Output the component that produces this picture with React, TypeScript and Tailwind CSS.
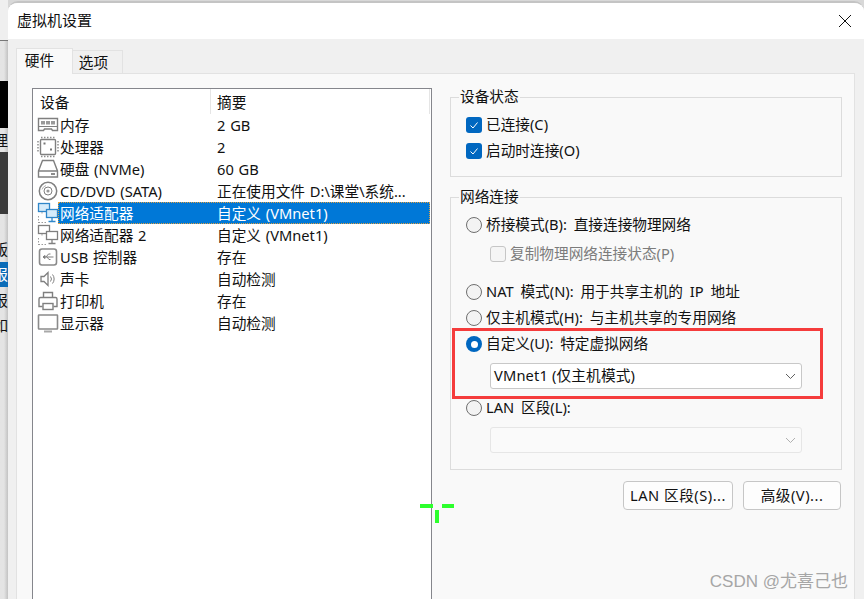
import type { ReactNode } from "react";

const FONT = "font-['Noto_Sans','Noto_Sans_CJK_SC',sans-serif]";

// ---- device icons ----
const iconProps = { width: 22, height: 22, viewBox: "0 0 22 22", fill: "none", stroke: "#7f7f7f", strokeWidth: 1, className: "flex-none" };

function MemoryIcon() {
  return (
    <svg {...iconProps}>
      <path d="M1.5 4.5h19v12h-5l-1-1.5h-7l-1 1.5h-5z" strokeWidth={1.4} />
      <path d="M1.5 12.5h19" />
      <rect x="4" y="7" width="4" height="3.5" fill="#9a9a9a" stroke="none" />
      <rect x="9" y="7" width="4" height="3.5" fill="#9a9a9a" stroke="none" />
      <rect x="14" y="7" width="4" height="3.5" fill="#9a9a9a" stroke="none" />
    </svg>
  );
}

function CpuIcon() {
  return (
    <svg {...iconProps}>
      <rect x="3.5" y="3.5" width="15" height="15" rx="1" strokeWidth={1.4} />
      <path d="M4 1.5h14M4 20.500h14M1 5v12M21 5v12" strokeDasharray="1.5 1.5" strokeWidth={1.5} stroke="#8c8c8c" />
      <rect x="6.5" y="6.5" width="2" height="2" fill="#777" stroke="none" />
      <rect x="13" y="12.5" width="2" height="2" fill="#777" stroke="none" />
    </svg>
  );
}

function DiskIcon() {
  return (
    <svg {...iconProps}>
      <path d="M5.5 2.5h11l4 10.5v6h-19v-6z" strokeWidth={1.4} />
      <path d="M1.5 13h19" strokeWidth={1.4} />
      <path d="M14 16h4" stroke="#666" strokeWidth={1.5} />
    </svg>
  );
}

function CdIcon() {
  return (
    <svg {...iconProps}>
      <circle cx="11" cy="11" r="8.7" strokeWidth={1.5} />
      <circle cx="11" cy="11" r="4" />
      <circle cx="11" cy="11" r="1.6" fill="#999" stroke="none" />
      <path d="M5 9.5a6 6 0 0 1 4-4" stroke="#b5b5b5" />
    </svg>
  );
}

function NetIcon({ active }: { active?: boolean }) {
  const c = active ? "#2f86c9" : "#7f7f7f";
  return (
    <svg {...iconProps}>
      <rect x="1.5" y="1.5" width="11" height="8" stroke={c} strokeWidth={1.3} fill={active ? "#d6ebfa" : "none"} />
      <rect x="9.5" y="7.5" width="11" height="8" stroke={c} strokeWidth={1.3} fill={active ? "#d6ebfa" : "#fff"} />
      <path d="M15 16v3M11.5 19.5h7" stroke={c} strokeWidth={1.3} />
      <path d="M5 10v3M1.5 14v7M1.5 20.5h8" stroke="#9b9b9b" strokeDasharray="1.5 1.5" />
    </svg>
  );
}

function UsbIcon() {
  return (
    <svg {...iconProps}>
      <rect x="2.5" y="3" width="17" height="16" rx="2.5" strokeWidth={1.6} stroke="#8a8a8a" />
      <path d="M6 11h10.5M9 11l2.5-3h2M10 11l2 2.5h1.5" />
      <path d="M6 11l2-1.5v3z" fill="#7f7f7f" />
    </svg>
  );
}

function SoundIcon() {
  return (
    <svg {...iconProps}>
      <path d="M4 8.5h3l4-4v13l-4-4H4z" strokeWidth={1.3} />
      <path d="M13.5 8.5a4 4 0 0 1 0 5M15.5 6.5a7 7 0 0 1 0 9" />
    </svg>
  );
}

function PrinterIcon() {
  return (
    <svg {...iconProps}>
      <path d="M6.5 7.5v-5h9v5" strokeWidth={1.4} />
      <path d="M5.5 16.5h-3.500v-7.500a1.500 1.500 0 0 1 1.500-1.500h15a1.500 1.500 0 0 1 1.500 1.500v7.500h-3.500" strokeWidth={1.4} />
      <rect x="6" y="13.500" width="10" height="6" strokeWidth={1.4} />
    </svg>
  );
}

function MonitorIcon() {
  return (
    <svg {...iconProps}>
      <rect x="1.500" y="3" width="19" height="14" rx="0.500" strokeWidth={1.600} stroke="#8a8a8a" />
      <path d="M7 19.500h8" strokeWidth={2} stroke="#a8a8a8" />
    </svg>
  );
}

const devices: { icon: ReactNode; name: string; summary: string; selected?: boolean }[] = [
  { icon: <MemoryIcon />, name: "内存", summary: "2 GB" },
  { icon: <CpuIcon />, name: "处理器", summary: "2" },
  { icon: <DiskIcon />, name: "硬盘 (NVMe)", summary: "60 GB" },
  { icon: <CdIcon />, name: "CD/DVD (SATA)", summary: "正在使用文件 D:\\课堂\\系统..." },
  { icon: <NetIcon active />, name: "网络适配器", summary: "自定义 (VMnet1)", selected: true },
  { icon: <NetIcon />, name: "网络适配器 2", summary: "自定义 (VMnet1)" },
  { icon: <UsbIcon />, name: "USB 控制器", summary: "存在" },
  { icon: <SoundIcon />, name: "声卡", summary: "自动检测" },
  { icon: <PrinterIcon />, name: "打印机", summary: "存在" },
  { icon: <MonitorIcon />, name: "显示器", summary: "自动检测" },
];

// ---- form bits ----
function Check({ on, disabled, label }: { on?: boolean; disabled?: boolean; label: string }) {
  return (
    <div className={`flex h-4 items-center gap-1 ${disabled ? "text-[#7c7c7c]" : "text-[#111]"}`}>
      {on ? (
        <span className="flex h-4 w-4 items-center justify-center rounded-[3px] bg-[#0067c0]">
          <svg width="10" height="10" viewBox="0 0 10 10" fill="none" stroke="#fff" strokeWidth="1">
            <path d="M1.500 5.500l2.500 2.500 4.500-5.500" />
          </svg>
        </span>
      ) : (
        <span className="h-4 w-4 rounded-[3px] border border-[#c6c6c6] bg-[#f5f5f5]" />
      )}
      <span className="whitespace-nowrap pb-[2px]">{label}</span>
    </div>
  );
}

function Radio({ on, label, className = "" }: { on?: boolean; label: string; className?: string }) {
  return (
    <div className={`flex h-4 items-center gap-1 text-[#111] ${className}`}>
      {on ? (
        <span className="flex h-4 w-4 items-center justify-center rounded-full bg-[#0067c0]">
          <span className="h-[7px] w-[7px] rounded-full bg-white" />
        </span>
      ) : (
        <span className="h-4 w-4 rounded-full border border-[#6f6f6f] bg-[#f3f3f3]" />
      )}
      <span className="whitespace-nowrap pb-[2px] [word-spacing:3px]">{label}</span>
    </div>
  );
}

function Combo({ value, disabled }: { value?: string; disabled?: boolean }) {
  return (
    <div
      className={`ml-6 flex h-[26px] w-[312px] items-center justify-between rounded-[3px] border pl-[3px] pr-[4px] ${
        disabled ? "border-[#e6e6e6] bg-[#fafafa]" : "border-[#c8c8c8] bg-white"
      }`}
    >
      <span className="whitespace-nowrap pb-[2px] tracking-[0.15px] text-[#111]">{value}</span>
      <svg width="11" height="7" viewBox="0 0 11 7" fill="none" stroke={disabled ? "#b0b0b0" : "#606060"} strokeWidth="1" className="mr-[1px]">
        <path d="M1 1l4.500 4.500L10 1" />
      </svg>
    </div>
  );
}

function Button({ label, width }: { label: string; width: string }) {
  return (
    <div className={`flex h-[29px] items-center justify-center rounded-[4px] border border-[#c6c6c6] bg-[#fdfdfd] pb-[2px] tracking-[0.5px] text-[#111] ${width}`}>
      {label}
    </div>
  );
}

function Group({ title, height, children }: { title: string; height: string; children: ReactNode }) {
  return (
    <fieldset className={`w-[392px] border border-[#dcdcdc] pl-[15px] ${height}`}>
      <legend className="-ml-[7px] h-5 px-[1px] leading-[18px] text-[#111]">{title}</legend>
      {children}
    </fieldset>
  );
}

// ---- clipped window behind the dialog ----
function BackdropStrip() {
  const lower = "bg-linear-to-r from-[#e4e4e4] from-50% to-[#c2c2c2]";
  return (
    <div className="flex h-full w-2 flex-none flex-col overflow-hidden text-[15px] leading-none text-[#111]">
      <div className="h-10 flex-none bg-[#efefef]" />
      <div className={`h-[41px] flex-none border-t border-[#777] ${lower}`} />
      <div className="h-[47px] flex-none bg-black" />
      <div className={`flex h-6 flex-none items-center justify-end ${lower}`}>
        <span>理</span>
      </div>
      <div className="h-[62px] flex-none bg-[#3b3b3b]" />
      <div className={`h-[22px] flex-none ${lower}`} />
      <div className={`flex h-[26px] flex-none items-center justify-end ${lower}`}><span>版</span></div>
      <div className="flex h-[25px] flex-none items-center justify-end bg-[#0b6cb8] text-white"><span>报</span></div>
      <div className={`flex h-[26px] flex-none items-center justify-end ${lower}`}><span>报</span></div>
      <div className={`flex h-[25px] flex-none items-center justify-end ${lower}`}><span>如</span></div>
      <div className={`flex-1 ${lower}`} />
    </div>
  );
}

export default function App() {
  return (
    <div className={`relative flex h-[599px] w-[864px] overflow-hidden bg-[#d8d8d8] text-[14.67px] ${FONT}`}>
      <BackdropStrip />

      <div className="mt-[1px] flex h-full flex-1 flex-col overflow-hidden rounded-t-[10px] border-t-2 border-[#c4c4c4] bg-[#f0f0f0]">
        {/* title bar */}
        <div className="flex h-[36px] flex-none items-center justify-between bg-white pl-[9px] pr-[12px] text-[15px] text-[#111]">
          <span className="pb-[2px]">虚拟机设置</span>
          <svg width="14" height="14" viewBox="0 0 14 14" fill="none" stroke="#111" strokeWidth="1">
            <path d="M1 1l12 12M13 1L1 13" />
          </svg>
        </div>

        {/* tabs */}
        <div className="ml-2 mt-[9px] flex h-[25px] flex-none items-end">
          <div className="relative z-10 -mb-[1px] flex h-[26px] w-[57px] items-center justify-center border border-b-0 border-[#e2e2e2] bg-[#f9f9f9] pb-[4px] pr-[10px] text-[#111]">
            硬件
          </div>
          <div className="-mb-[1px] flex h-6 w-[50px] items-center justify-center border border-b-0 border-l-0 border-[#e2e2e2] bg-[#f0f0f0] pb-[1px] pr-[8px] text-[#111]">
            选项
          </div>
        </div>

        {/* page */}
        <div className="ml-2 mr-[9px] flex flex-1 gap-[18px] border border-[#e2e2e2] bg-[#f9f9f9] pl-[15px] pt-[14px]">
          {/* device list */}
          <div className="h-[600px] w-[400px] flex-none border border-[#85868c] bg-white text-[#111]">
            <div className="flex h-[25px] items-center">
              <div className="flex h-full w-[178px] items-center border-r border-[#e5e5e5] pl-[7px]">设备</div>
              <div className="flex h-full w-[219px] items-center border-r border-[#e5e5e5] pl-[6px]">摘要</div>
            </div>
            {devices.map((d) => (
              <div key={d.name} className="flex h-[22px] items-center">
                <span className="ml-[4px] flex h-[22px] w-[21px] flex-none items-center">{d.icon}</span>
                <div
                  className={`flex h-[22px] w-[372px] flex-none items-center whitespace-nowrap [word-spacing:1px] ${
                    d.selected ? "border border-dotted border-[#e0a040] bg-[#0078d7] text-white" : "border border-transparent"
                  }`}
                >
                  <span className="w-[158px] flex-none pl-[1px]">{d.name}</span>
                  <span>{d.summary}</span>
                </div>
              </div>
            ))}
          </div>

          {/* right side */}
          <div className="-mt-[1px] flex-none">
            <Group title="设备状态" height="h-[90px]">
              <div className="flex flex-col gap-[10px] pt-[10px]">
                <Check on label="已连接(C)" />
                <Check on label="启动时连接(O)" />
              </div>
            </Group>

            <div className="mt-[10px]">
              <Group title="网络连接" height="h-[283px]">
                <div className="flex flex-col pt-[10px]">
                  <Radio label="桥接模式(B): 直接连接物理网络" />
                  <div className="ml-6 mt-[13px]">
                    <Check disabled label="复制物理网络连接状态(P)" />
                  </div>
                  <Radio className="mt-[22px]" label="NAT 模式(N): 用于共享主机的 IP 地址" />
                  <Radio className="mt-[10px]" label="仅主机模式(H): 与主机共享的专用网络" />
                  <div className="relative mt-[10px]">
                    <Radio on label="自定义(U): 特定虚拟网络" />
                    <div className="mt-[11px]">
                      <Combo value="VMnet1 (仅主机模式)" />
                    </div>
                    {/* red annotation drawn over the screenshot */}
                    <div className="pointer-events-none absolute -left-[14px] -top-[8px] h-[71px] w-[371px] border-[3px] border-[#f53c3c]" />
                  </div>
                  <Radio className="mt-[11px]" label="LAN 区段(L):" />
                  <div className="mt-[11px]">
                    <Combo disabled />
                  </div>
                </div>
              </Group>
            </div>

            <div className="mr-[1px] mt-[11px] flex justify-end gap-[10px]">
              <Button label="LAN 区段(S)..." width="w-[110px]" />
              <Button label="高级(V)..." width="w-[98px]" />
            </div>
          </div>
        </div>
      </div>

      {/* green cursor marks */}
      <div className="absolute left-[420px] top-[504px] h-1 w-[13px] bg-[#2dff2d]" />
      <div className="absolute left-[442px] top-[504px] h-1 w-3 bg-[#2dff2d]" />
      <div className="absolute left-[435px] top-[510px] h-[13px] w-1 bg-[#2dff2d]" />

      {/* watermark */}
      <div className="absolute right-[16px] top-[569px] font-['Liberation_Sans','Noto_Sans_CJK_SC',sans-serif] text-[17px] text-[#a6a6a6]">
        CSDN @尤喜己也
      </div>
    </div>
  );
}
